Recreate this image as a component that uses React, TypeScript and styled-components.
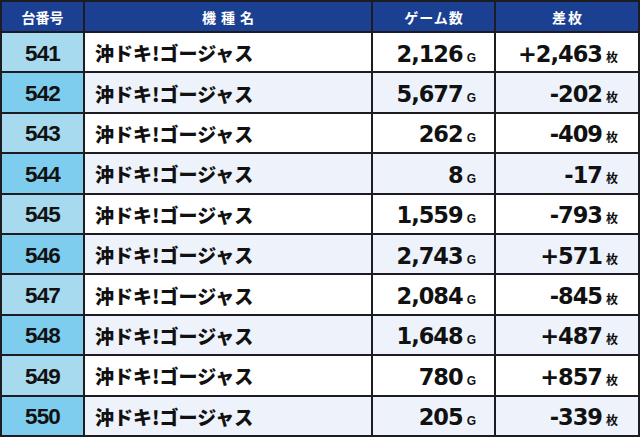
import styled, { createGlobalStyle } from "styled-components";

const GlobalStyle = createGlobalStyle`
  html, body {
    margin: 0;
    padding: 0;
    background: #ffffff;
  }
`;

const Table = styled.div`
  display: grid;
  grid-template-columns: 81px 286px 121px 142px;
  grid-template-rows: 29px repeat(10, 38.4px);
  gap: 2px;
  width: 640px;
  height: 437px;
  box-sizing: border-box;
  padding: 2px;
  background: #1c1c22;
  font-family: "Liberation Sans", "Noto Sans CJK JP", sans-serif;
`;

const HeadCell = styled.div<{ $spacing?: number }>`
  display: flex;
  align-items: center;
  justify-content: center;
  background: #1b3f91;
  color: #ffffff;
  font-family: "Noto Sans CJK JP", sans-serif;
  font-size: 14px;
  font-weight: 700;
  letter-spacing: ${(p) => p.$spacing ?? 0}px;
  padding-left: ${(p) => p.$spacing ?? 0}px;
`;

const NoCell = styled.div<{ $even: boolean }>`
  display: flex;
  align-items: center;
  justify-content: center;
  padding-top: 3px;
  background: ${(p) => (p.$even ? "#7fcdee" : "#a7d9ef")};
  color: #111;
  font-size: 22.5px;
  font-weight: 700;
  letter-spacing: -0.8px;
`;

const NameCell = styled.div<{ $even: boolean }>`
  display: flex;
  align-items: center;
  padding-left: 10px;
  padding-top: 1px;
  background: ${(p) => (p.$even ? "#eef3fb" : "#ffffff")};
  color: #111;
  font-family: "Noto Sans CJK JP", sans-serif;
  font-size: 19px;
  font-weight: 900;
`;

const NumCell = styled.div<{ $even: boolean; $pad: number }>`
  display: flex;
  align-items: center;
  justify-content: flex-end;
  padding-right: ${(p) => p.$pad}px;
  background: ${(p) => (p.$even ? "#eef3fb" : "#ffffff")};
  color: #111;
`;

const Amount = styled.span`
  display: flex;
  align-items: baseline;
  padding-top: 3px;
`;

const Value = styled.span`
  font-family: "DejaVu Sans", sans-serif;
  font-size: 22.5px;
  font-weight: 700;
  letter-spacing: -1px;
`;

const Unit = styled.span`
  margin-left: 4px;
  font-size: 12px;
  font-weight: 700;
  font-family: "Liberation Sans", "Noto Sans CJK JP", sans-serif;
`;

const rows = [
  { no: 541, games: "2,126", diff: "+2,463" },
  { no: 542, games: "5,677", diff: "-202" },
  { no: 543, games: "262", diff: "-409" },
  { no: 544, games: "8", diff: "-17" },
  { no: 545, games: "1,559", diff: "-793" },
  { no: 546, games: "2,743", diff: "+571" },
  { no: 547, games: "2,084", diff: "-845" },
  { no: 548, games: "1,648", diff: "+487" },
  { no: 549, games: "780", diff: "+857" },
  { no: 550, games: "205", diff: "-339" },
];

export default function App() {
  return (
    <>
      <GlobalStyle />
      <Table>
        <HeadCell>台番号</HeadCell>
        <HeadCell $spacing={5}>機種名</HeadCell>
        <HeadCell $spacing={1}>ゲーム数</HeadCell>
        <HeadCell $spacing={2}>差枚</HeadCell>
        {rows.map((r, i) => {
          const even = i % 2 === 1;
          return [
            <NoCell key={`n${r.no}`} $even={even}>
              {r.no}
            </NoCell>,
            <NameCell key={`m${r.no}`} $even={even}>
              沖ドキ!ゴージャス
            </NameCell>,
            <NumCell key={`g${r.no}`} $even={even} $pad={18}>
              <Amount>
                <Value>{r.games}</Value>
                <Unit>G</Unit>
              </Amount>
            </NumCell>,
            <NumCell key={`d${r.no}`} $even={even} $pad={20}>
              <Amount>
                <Value>{r.diff}</Value>
                <Unit>枚</Unit>
              </Amount>
            </NumCell>,
          ];
        })}
      </Table>
    </>
  );
}
